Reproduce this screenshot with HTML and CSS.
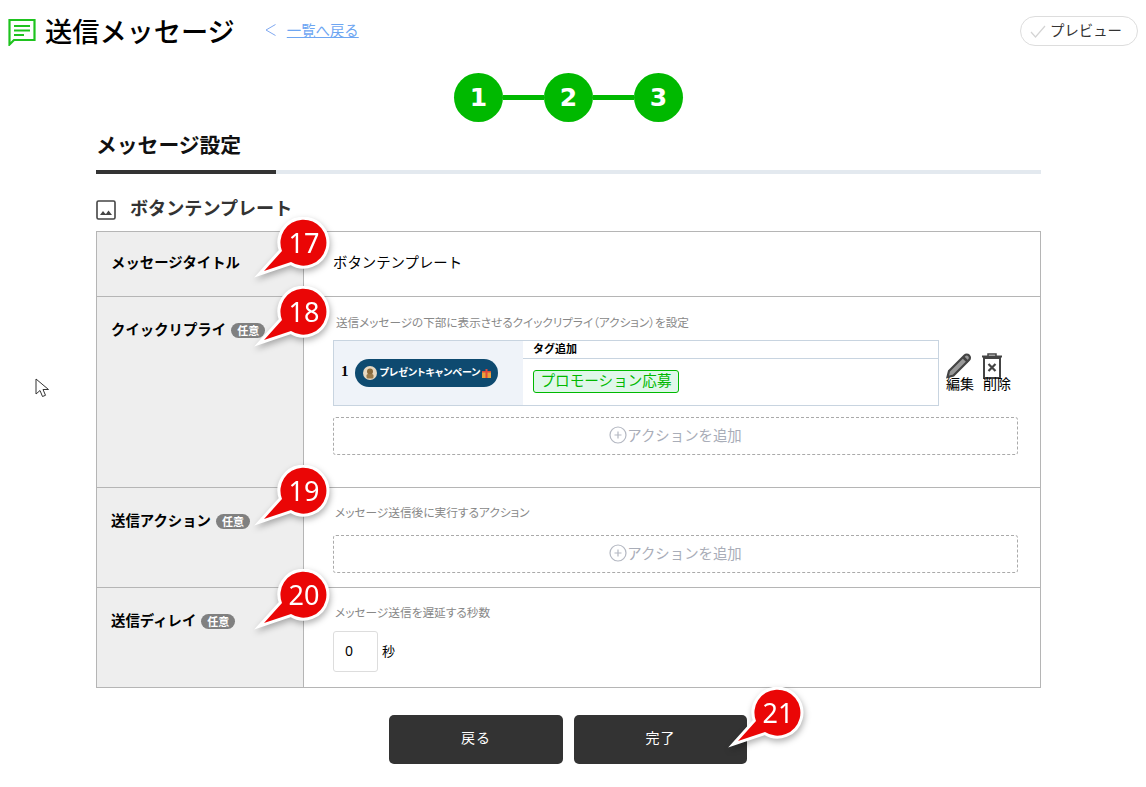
FILE: index.html
```html
<!DOCTYPE html>
<html lang="ja">
<head>
<meta charset="utf-8">
<title>送信メッセージ</title>
<link rel="stylesheet" href="styles.css">
</head>
<body>
<svg class="defs" width="0" height="0"><defs>
<symbol id="bubble" viewBox="0 0 76 70"><path d="M10 54L28 34A23 23 0 1 1 37 45Z" fill="#ea0606" stroke="#fff" stroke-width="6" stroke-linejoin="miter" stroke-miterlimit="6" paint-order="stroke"/></symbol>
<symbol id="plus" viewBox="0 0 18 18"><circle cx="9" cy="9" r="8" fill="none" stroke="#b4b8c2" stroke-width="1.2"/><path d="M5.5 9h7M9 5.5v7" stroke="#b4b8c2" stroke-width="1.2"/></symbol>
</defs></svg>
<div class="page">
  <header class="top">
    <svg class="msg-icon" width="28" height="28" viewBox="0 0 28 28"><path d="M1.500 2h25v20H6l-4.500 4.500Z" fill="none" stroke="#1fc31f" stroke-width="2.200"/><path d="M6 8h16M6 12.500h16M6 17h10" stroke="#1fc31f" stroke-width="2"/></svg>
    <h1 class="title">送信メッセージ</h1>
    <svg class="chev" width="11" height="12" viewBox="0 0 11 12"><path d="M10.500 .5L1 6l9.500 5.500" fill="none" stroke="#7fa8f0" stroke-width="1"/></svg>
    <a class="back" href="#">一覧へ戻る</a>
    <button class="preview"><svg width="16" height="14" viewBox="0 0 16 14"><path d="M1 8l4.500 5L15 2" fill="none" stroke="#d4d4d4" stroke-width="1.200"/></svg><span class="preview-label">プレビュー</span></button>
  </header>
  <div class="steps">
    <span class="step">1</span><span class="link"></span><span class="step">2</span><span class="link"></span><span class="step">3</span>
  </div>
  <main class="main">
    <div class="tabs"><span class="tab">メッセージ設定</span></div>
    <div class="tpl-head">
      <svg class="tpl-icon" width="20" height="20" viewBox="0 0 20 20"><rect x="1" y="1" width="18" height="18" rx="1.500" fill="none" stroke="#444" stroke-width="1.600"/><path d="M4 15l3-4 2 2.500 1 .5 2.500-3.500 3.500 4.500Z" fill="#444"/></svg>
      <span>ボタンテンプレート</span>
    </div>
    <section class="table">
      <div class="row row1">
        <div class="head head1"><span>メッセージタイトル</span></div>
        <div class="body body1">ボタンテンプレート</div>
      </div>
      <div class="row row2">
        <div class="head"><span>クイックリプライ</span><em class="opt">任意</em></div>
        <div class="body">
          <p class="desc">送信メッセージの下部に表示させるクイックリプライ（アクション）を設定</p>
          <div class="qr">
            <div class="qr-box">
              <div class="qr-left">
                <b class="num">1</b>
                <span class="pill">
                  <svg width="14" height="14" viewBox="0 0 14 14"><circle cx="7" cy="7" r="7" fill="#e8d8c0"/><circle cx="7" cy="5.500" r="3" fill="#8a6a3c"/><rect x="3.500" y="8" width="7" height="4.500" rx="1.500" fill="#9a7a4a"/></svg>
                  <span class="pill-text">プレゼントキャンペーン</span>
                  <svg width="9" height="9" viewBox="0 0 9 9"><rect y="2" width="9" height="7" fill="#e9a13b"/><rect x="3.500" y="0" width="2" height="9" fill="#e0483a"/><rect y="2" width="9" height="1.500" fill="#e0483a"/></svg>
                </span>
              </div>
              <div class="qr-right">
                <div class="tag-head">タグ追加</div>
                <div class="tag-body"><span class="tag">プロモーション応募</span></div>
              </div>
            </div>
            <div class="tools">
              <div class="tool">
                <svg width="26" height="26" viewBox="0 0 26 26"><path d="M1.500 24l1.500-6L18.500 2.500a2.800 2.800 0 0 1 4.500 4.500L7.500 22.500Z" fill="#999" stroke="#444" stroke-width="2.200"/><path d="M17 4l5 5" stroke="#444" stroke-width="2.500"/></svg>
                <span>編集</span>
              </div>
              <div class="tool">
                <svg class="trash" width="22" height="26" viewBox="0 0 22 26"><path d="M1 3.500h20" stroke="#444" stroke-width="2"/><path d="M7 3V1h8v2" fill="none" stroke="#444" stroke-width="1.500"/><rect x="3" y="5" width="16" height="20" fill="#fff" stroke="#444" stroke-width="2"/><path d="M7.500 11l7 7M14.500 11l-7 7" stroke="#444" stroke-width="2.200"/></svg>
                <span>削除</span>
              </div>
            </div>
          </div>
          <div class="add"><svg width="18" height="18"><use href="#plus"/></svg>アクションを追加</div>
        </div>
      </div>
      <div class="row row3">
        <div class="head"><span>送信アクション</span><em class="opt">任意</em></div>
        <div class="body">
          <p class="desc desc2">メッセージ送信後に実行するアクション</p>
          <div class="add add2"><svg width="18" height="18"><use href="#plus"/></svg>アクションを追加</div>
        </div>
      </div>
      <div class="row row4">
        <div class="head"><span>送信ディレイ</span><em class="opt">任意</em></div>
        <div class="body">
          <p class="desc desc2">メッセージ送信を遅延する秒数</p>
          <div class="delay"><span class="input">0</span><span class="sec">秒</span></div>
        </div>
      </div>
    </section>
    <div class="actions">
      <button class="btn">戻る</button>
      <button class="btn">完了</button>
    </div>
  </main>
  <div class="callout c17"><svg width="76" height="70"><use href="#bubble"/></svg><span>17</span></div>
  <div class="callout c18"><svg width="76" height="70"><use href="#bubble"/></svg><span>18</span></div>
  <div class="callout c19"><svg width="76" height="70"><use href="#bubble"/></svg><span>19</span></div>
  <div class="callout c20"><svg width="76" height="70"><use href="#bubble"/></svg><span>20</span></div>
  <div class="callout c21"><svg width="76" height="70"><use href="#bubble"/></svg><span>21</span></div>
  <svg class="cursor" width="16" height="22" viewBox="0 0 16 22"><path d="M1 1v15l4-3.500 2.500 6 3-1.200-2.500-5.800h5.500Z" fill="#fff" stroke="#333" stroke-width="1"/></svg>
</div>
</body>
</html>
```
FILE: styles.css
```css
* { box-sizing: border-box; }
html, body { margin: 0; background: #fff; }
body { font-family: "Noto Sans CJK JP", "Noto Sans", sans-serif; color: #000; }
.defs { position: absolute; }
.page { position: relative; width: 1146px; height: 787px; overflow: hidden; }

.top { display: flex; align-items: center; height: 60px; padding: 0 8px; }
.msg-icon { flex: none; margin-top: 3px; }
.title { margin: 0 0 0 9px; font-size: 27.200px; line-height: 60px; font-weight: 500; }
.chev { flex: none; margin: 0 0 0 30px; }
.back { margin: 0 0 2px 11px; color: #6ea6f2; font-size: 14.400px; text-decoration: underline; }
.preview { margin-left: auto; width: 118px; height: 30px; border: 1px solid #ddd; border-radius: 15px; background: #fff; display: flex; align-items: center; padding: 0 0 0 9px; gap: 4px; font: 14.400px "Noto Sans CJK JP", sans-serif; color: #333; position: relative; top: 1px; }
.preview-label { margin-top: -3px; }

.steps { display: flex; justify-content: center; align-items: center; margin: 13px 0 0 -9px; height: 49px; }
.step { width: 49px; height: 49px; border-radius: 50%; background: #00b900; color: #fff; font: bold 25px/49px "DejaVu Sans", sans-serif; text-align: center; }
.link { width: 41px; height: 5px; background: #00b900; }

.main { margin-left: 96px; width: 945px; }
.tabs { height: 52px; border-bottom: 4px solid #e3e9ef; display: flex; }
.tab { width: 180px; height: 52px; border-bottom: 4px solid #333; font-size: 20.800px; font-weight: 700; line-height: 44px; color: #111; }
.tpl-head { height: 57px; display: flex; align-items: center; gap: 14px; padding-top: 8px; color: #333; font-size: 18.100px; font-weight: 700; }
.tpl-icon { margin-top: 7px; }
.table { border: 1px solid #b5b5b5; border-bottom: 0; }
.row { display: grid; grid-template-columns: 207px 1fr; border-bottom: 1px solid #b5b5b5; }
.row1 { height: 65px; }
.row2 { height: 191px; }
.row3 { height: 100px; }
.row4 { height: 100px; }
.head { background: #eee; border-right: 1px solid #b5b5b5; padding: 22px 0 0 14px; font-size: 14.400px; font-weight: 700; line-height: 20px; display: flex; align-items: flex-start; gap: 5px; }
.head1 { padding-top: 20px; }
.opt { font-style: normal; font-size: 11px; line-height: 15px; height: 15px; padding: 0 6px; margin-top: 4px; border-radius: 8px; background: #808080; color: #fff; font-weight: 700; }
.body { padding: 0 22px 0 29px; }
.body1 { font-size: 14.400px; line-height: 60px; }
.desc { margin: 0; padding: 16px 0 0 3px; font-size: 11.600px; line-height: 18px; color: #888; font-feature-settings: "palt"; }
.desc2 { padding: 15px 0 0 2px; font-size: 11.700px; }
.qr { display: flex; margin-top: 9px; }
.qr-box { width: 606px; height: 66px; border: 1px solid #c8d4e0; display: flex; }
.qr-left { width: 189px; background: #eff3f9; display: flex; align-items: flex-start; padding: 18px 0 0 7px; gap: 6px; }
.num { font: bold 15px/24px "Liberation Serif", serif; }
.pill { width: 143px; height: 28px; border-radius: 14px; background: #0e4a70; color: #fff; display: flex; align-items: center; gap: 2px; padding-left: 8px; font-size: 10px; font-weight: 700; font-feature-settings: "palt"; }
.pill-text { margin: -3px 0 0 1px; }
.qr-right { flex: 1; }
.tag-head { height: 18px; border-bottom: 1px solid #c8d4e0; padding-left: 10px; font-size: 11px; line-height: 15px; font-weight: 700; }
.tag-body { display: flex; padding: 11px 0 0 10px; }
.tag { width: 146px; height: 23px; border: 1px solid #00b900; border-radius: 3px; background: #e0f7ea; color: #00b900; font-size: 14.600px; line-height: 18px; text-align: center; white-space: nowrap; }
.tools { display: flex; margin: 13px 0 0 7px; gap: 8px; }
.tool { display: flex; flex-direction: column; width: 29px; font-size: 14px; line-height: 18px; height: 50px; }
.tool span { margin-top: -5px; white-space: nowrap; }
.trash { margin-left: -2px; }
.add { width: 685px; height: 38px; margin-top: 11px; padding-bottom: 3px; border: 1px dashed #aaa; border-radius: 3px; display: flex; justify-content: center; align-items: center; color: #a9adb8; font-size: 14.400px; }
.add2 { margin-top: 14px; }
.delay { display: flex; align-items: center; margin-top: 10px; gap: 4px; }
.input { width: 45px; height: 41px; border: 1px solid #ddd; border-radius: 3px; padding-left: 11px; font: 14px/37px "Noto Sans", sans-serif; }
.sec { font-size: 13px; margin-top: -2px; }

.actions { display: flex; justify-content: center; gap: 11px; margin: 27px 1px 0 0; }
.btn { width: 174px; height: 49px; padding: 0 0 5px; border: 0; border-radius: 5px; background: #333; color: #fff; font: 14px "Noto Sans CJK JP", sans-serif; letter-spacing: 1px; }
.btn + .btn { width: 173px; }

.callout { position: absolute; width: 76px; height: 70px; filter: drop-shadow(1px 3px 3px rgba(0,0,0,.3)); }
.callout svg { display: block; }
.callout span { position: absolute; left: 27px; top: 3px; width: 46px; height: 46px; color: #fff; font: 27px/46px "Noto Sans", sans-serif; text-align: center; }
.c17 { left: 254px; top: 217px; }
.c18 { left: 254px; top: 286px; }
.c19 { left: 254px; top: 465px; }
.c20 { left: 254px; top: 569px; }
.c21 { left: 728px; top: 687px; }
.cursor { position: absolute; left: 35px; top: 378px; }
```
